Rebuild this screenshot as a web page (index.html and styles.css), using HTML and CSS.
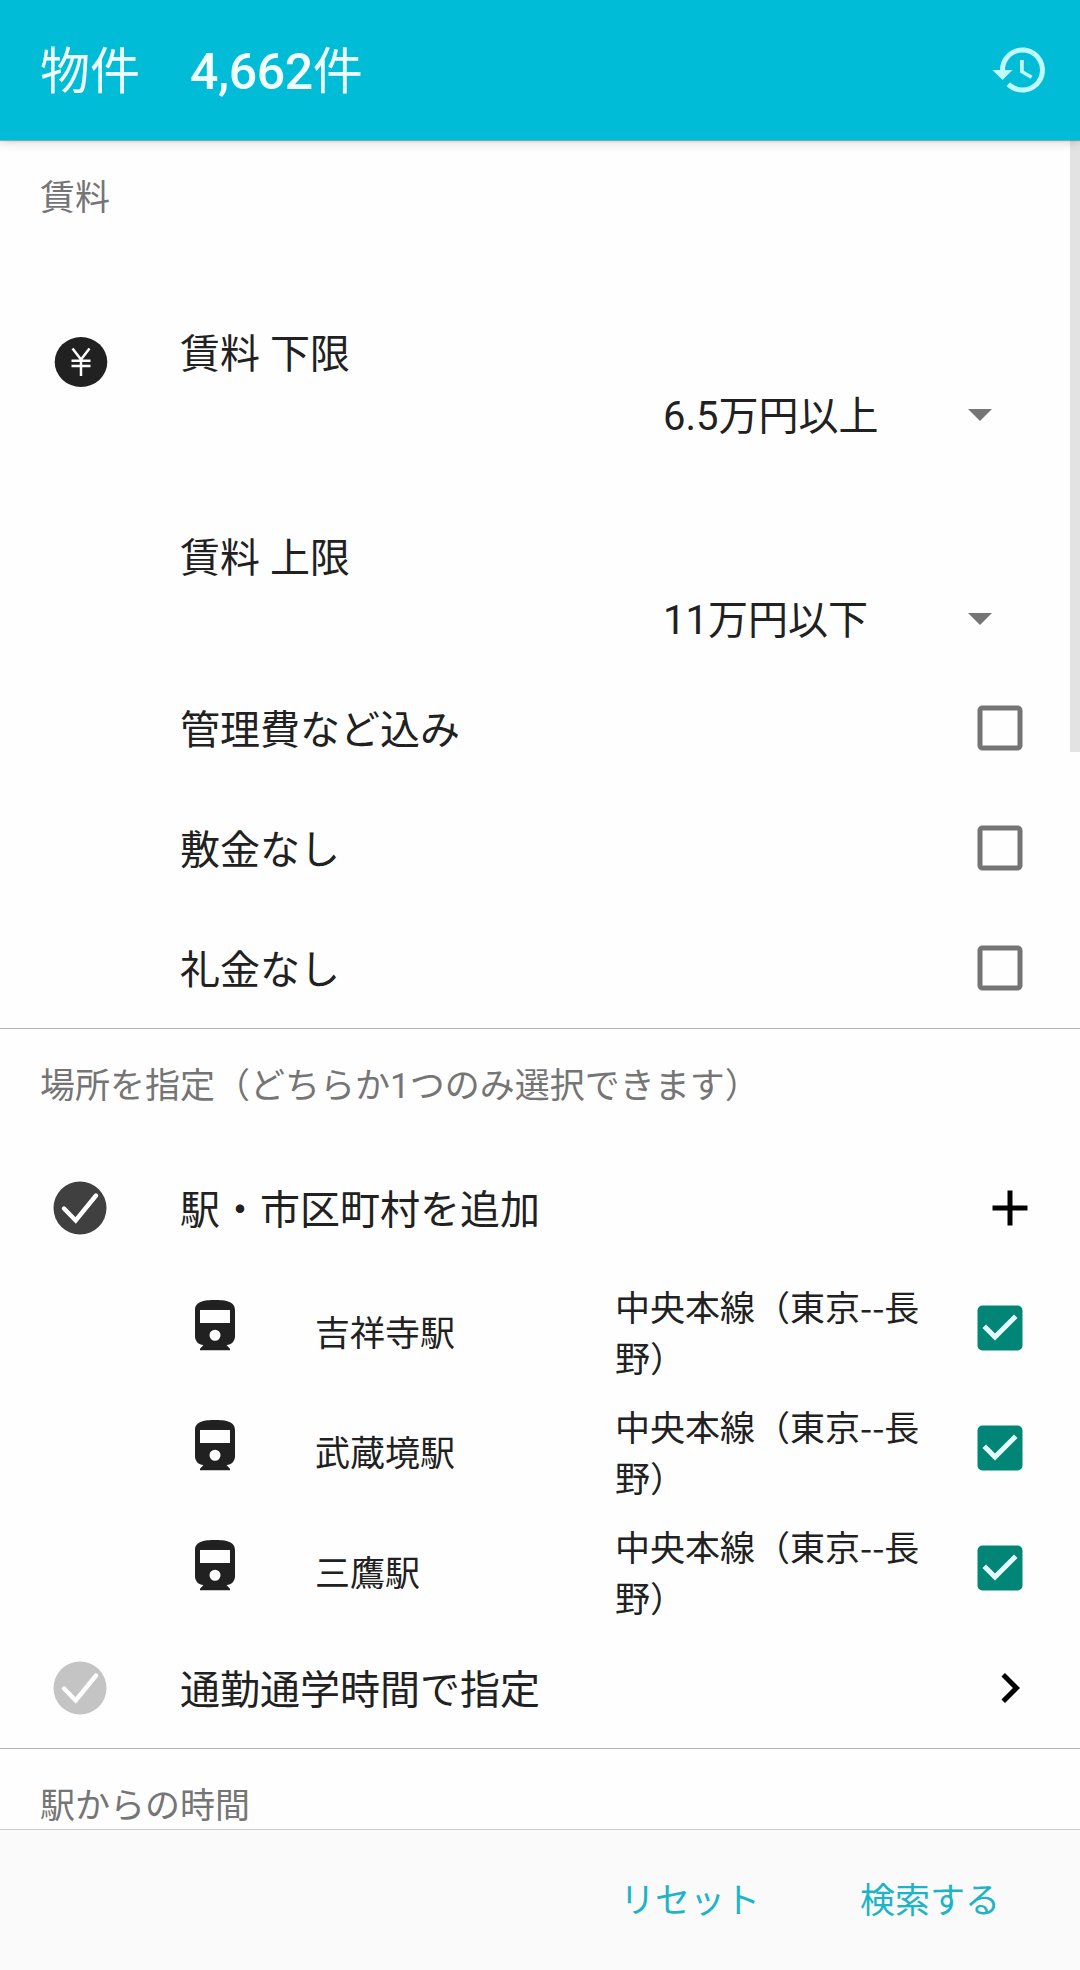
FILE: index.html
```
<!DOCTYPE html>
<html lang="ja">
<head>
  <meta charset="utf-8">
  <title>物件</title>
  <link rel="stylesheet" href="styles.css">
</head>
<body>
  <svg width="0" height="0" class="defs">
    <symbol id="box" viewBox="0 0 24 24">
      <path d="M19 5v14H5V5h14m0-2H5c-1.1 0-2 .9-2 2v14c0 1.1.9 2 2 2h14c1.1 0 2-.9 2-2V5c0-1.1-.9-2-2-2z"/>
    </symbol>
    <symbol id="box-checked" viewBox="0 0 24 24">
      <rect x="3" y="3" width="18" height="18" rx="2"/>
      <path fill="#e6ffff" d="M10 17l-5-5 1.41-1.41L10 14.17l7.59-7.59L19 8z"/>
    </symbol>
    <symbol id="train" viewBox="0 0 24 24">
      <path fill-rule="evenodd" d="M12 2c-4 0-8 .5-8 4v10.5C4 18.4 5.4 20 7.4 20L6 21.5v.6h12v-.6L16.6 20c2 0 3.4-1.6 3.4-3.5V6c0-3.5-4-4-8-4zM6 6h12v5.2H6zM12 13.9a2.2 2.2 0 1 1 0 4.4a2.2 2.2 0 1 1 0-4.4z"/>
    </symbol>
    <symbol id="round-check" viewBox="0 0 54 54">
      <circle cx="27" cy="27" r="26.5"/>
      <path d="M11 27.5l11.7 12L43 14.5" fill="none" stroke="#fff" stroke-width="4.4" stroke-linecap="round"/>
    </symbol>
  </svg>

  <header class="header">
    <h1 class="title">物件　<span class="count">4,662</span>件</h1>
    <svg class="icon history" viewBox="0 0 24 24"><path d="M13 3c-4.97 0-9 4.03-9 9H1l3.89 3.89.07.14L9 12H6c0-3.87 3.13-7 7-7s7 3.13 7 7-3.13 7-7 7c-1.93 0-3.68-.79-4.94-2.06l-1.42 1.42C8.27 19.99 10.51 21 13 21c4.97 0 9-4.03 9-9s-4.03-9-9-9zm-1 5v5l4.28 2.54.72-1.21-3.5-2.08V8H12z"/></svg>
  </header>

  <main class="list">
    <div class="scrollbar"></div>

    <section class="section">
      <h2 class="section-title">賃料</h2>
      <div class="row price">
        <svg class="yen" viewBox="0 0 54 50">
          <ellipse cx="27" cy="25" rx="26.3" ry="25" fill="#212121"/>
          <path d="M18.5 11.5L27 22.5l8.5-11M27 22v17M17.5 23.7h19M17.5 29h19" fill="none" stroke="#fff" stroke-width="2.5"/>
        </svg>
        <div class="field">
          <div class="label">賃料 下限</div>
          <div class="select"><span>6.5万円以上</span><i class="arrow"></i></div>
        </div>
      </div>
      <div class="row price">
        <div class="field">
          <div class="label">賃料 上限</div>
          <div class="select"><span>11万円以下</span><i class="arrow"></i></div>
        </div>
      </div>
      <div class="row"><span class="label">管理費など込み</span><svg class="icon check"><use href="#box"/></svg></div>
      <div class="row"><span class="label">敷金なし</span><svg class="icon check"><use href="#box"/></svg></div>
      <div class="row"><span class="label">礼金なし</span><svg class="icon check"><use href="#box"/></svg></div>
    </section>

    <section class="section">
      <h2 class="section-title">場所を指定（どちらか1つのみ選択できます）</h2>
      <div class="row">
        <svg class="round"><use href="#round-check"/></svg>
        <span class="label">駅・市区町村を追加</span>
        <svg class="icon action" viewBox="0 0 24 24"><path d="M19 13h-6v6h-2v-6H5v-2h6V5h2v6h6v2z"/></svg>
      </div>
      <div class="row station">
        <svg class="icon train"><use href="#train"/></svg>
        <span class="name">吉祥寺駅</span>
        <span class="line">中央本線（東京--長野）</span>
        <svg class="icon check checked"><use href="#box-checked"/></svg>
      </div>
      <div class="row station">
        <svg class="icon train"><use href="#train"/></svg>
        <span class="name">武蔵境駅</span>
        <span class="line">中央本線（東京--長野）</span>
        <svg class="icon check checked"><use href="#box-checked"/></svg>
      </div>
      <div class="row station">
        <svg class="icon train"><use href="#train"/></svg>
        <span class="name">三鷹駅</span>
        <span class="line">中央本線（東京--長野）</span>
        <svg class="icon check checked"><use href="#box-checked"/></svg>
      </div>
      <div class="row">
        <svg class="round off"><use href="#round-check"/></svg>
        <span class="label">通勤通学時間で指定</span>
        <svg class="icon action" viewBox="0 0 24 24"><path d="M10 6L8.59 7.41 13.17 12l-4.58 4.59L10 18l6-6z"/></svg>
      </div>
    </section>

    <section class="section">
      <h2 class="section-title">駅からの時間</h2>
    </section>
  </main>

  <footer class="footer">
    <button class="btn">リセット</button>
    <button class="btn">検索する</button>
  </footer>
</body>
</html>
```

FILE: styles.css
```
* {
  box-sizing: border-box;
}

body {
  display: flex;
  flex-direction: column;
  height: 1970px;
  margin: 0;
  overflow: hidden;
  background: #fefefe;
  color: #212121;
  font-family: Roboto, "Noto Sans CJK JP", sans-serif;
}

.defs {
  position: absolute;
}

.icon {
  flex: none;
  width: 60px;
  height: 60px;
}

/* header */
.header {
  display: flex;
  flex: none;
  align-items: center;
  justify-content: space-between;
  height: 140px;
  padding: 0 30px 0 40px;
  background: #00bcd7;
  box-shadow: 0 1px 1px rgba(0, 80, 100, 0.4), 0 2px 10px rgba(0, 0, 0, 0.18);
  z-index: 1;
}

.title {
  margin: 0;
  padding-top: 3px;
  color: #f2ffff;
  font-size: 50px;
  font-weight: 400;
  line-height: 72px;
}

.count {
  font-weight: 500;
  letter-spacing: -0.4px;
}

.history {
  fill: #c0fcff;
}

/* list */
.list {
  position: relative;
  flex: 1;
  min-height: 0;
  overflow: hidden;
}

.scrollbar {
  position: absolute;
  top: 0;
  right: 0;
  width: 10px;
  height: 612px;
  background: #e3e3e3;
}

.section {
  border-bottom: 1px solid #b4b4b4;
}

.section-title {
  height: 120px;
  margin: 0;
  padding: 33px 40px 0;
  color: #757575;
  font-size: 35px;
  font-weight: 400;
  line-height: 51px;
}

.section + .section .section-title {
  height: 119px;
  padding-top: 32px;
}

.row {
  display: flex;
  align-items: center;
  height: 120px;
  padding: 0 50px 0 180px;
}

.label {
  flex: 1;
  font-size: 40px;
  line-height: 58px;
  padding-top: 5px;
}

.price {
  height: 204px;
}

.field {
  flex: 1;
  padding-top: 43px;
}

.field .label {
  padding-top: 0;
}

.select {
  display: flex;
  align-items: center;
  justify-content: space-between;
  height: 58px;
  padding: 0 38px 0 483px;
  font-size: 40px;
}

.arrow {
  margin-top: 5px;
  border: 12px solid transparent;
  border-top-color: #757575;
  border-bottom: 0;
}

.yen {
  flex: none;
  width: 54px;
  height: 50px;
  margin: 0 72px 0 -126px;
}

.round {
  flex: none;
  width: 54px;
  height: 54px;
  margin: 0 73px 0 -127px;
  fill: #404040;
}

.off {
  fill: #c4c4c4;
}

.check {
  fill: #757575;
}

.checked {
  fill: #008577;
}

.action {
  margin-right: -10px;
}

.station {
  padding-left: 185px;
  font-size: 35px;
  line-height: 51px;
}

.train {
  margin-top: -6px;
  fill: #212121;
}

.name {
  width: 300px;
  margin-left: 70px;
  padding-top: 12px;
}

.line {
  width: 310px;
  padding-top: 5px;
  font-family: "Noto Sans CJK JP", sans-serif;
}

.station .check {
  margin-left: auto;
}

/* footer */
.footer {
  display: flex;
  flex: none;
  align-items: center;
  justify-content: flex-end;
  gap: 100px;
  height: 141px;
  padding: 2px 80px 0 0;
  border-top: 1px solid #cacaca;
  background: #fafafa;
}

.btn {
  padding: 0;
  border: 0;
  background: none;
  color: #1cb4c6;
  font: inherit;
  font-size: 35px;
  line-height: 51px;
}
```
